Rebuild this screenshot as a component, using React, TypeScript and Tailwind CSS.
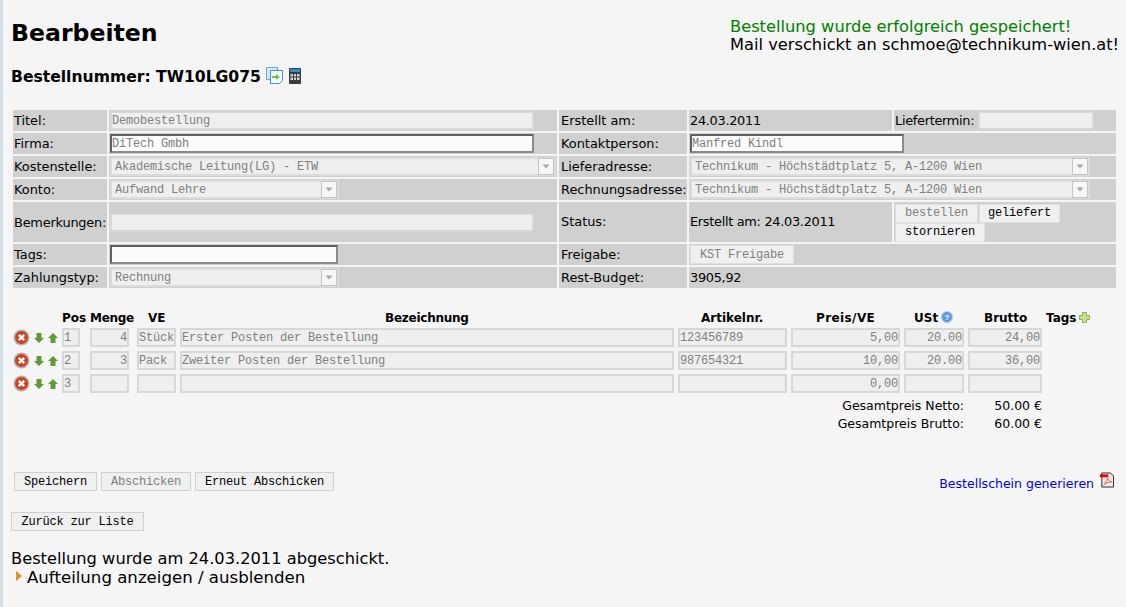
import React from "react";

const mono = "font-['Liberation_Mono',monospace] tracking-[-0.2px]";

function Field({ value = "", w, enabled = false, right = false, cls = "" }: { value?: string; w: string; enabled?: boolean; right?: boolean; cls?: string }) {
  return (
    <input
      readOnly
      value={value}
      className={`${w} ${cls} h-[19px] px-0 ${mono} text-[12px] leading-[14px] outline-none ${right ? "text-right" : ""} ${
        enabled
          ? "bg-[#fcfcfc] text-[#808080] border-2 border-t-[#606060] border-l-[#606060] border-r-[#8a8a8a] border-b-[#8a8a8a]"
          : "bg-[#efefef] text-[#808080] border-2 border-[#d8d8d8]"
      }`}
    />
  );
}

function Sel({ value, w }: { value: string; w: string }) {
  return (
    <div className={`${w} h-[19px] flex items-center justify-between bg-[#efefef] border-2 border-[#dcdcdc] pl-[3px] ${mono} text-[12px] text-[#808080]`}>
      <span className="pt-[1px]">{value}</span>
      <span className="w-[16px] h-[17px] bg-[#f7f7f7] border border-[#c4c4c4] flex items-center justify-center shrink-0">
        <svg width="8" height="5" viewBox="0 0 8 5"><path d="M0.5 0.5h7L4 4.5z" fill="#a8a8a8" /></svg>
      </span>
    </div>
  );
}

function Btn({ children, disabled = false, cls = "" }: { children: React.ReactNode; disabled?: boolean; cls?: string }) {
  return (
    <span className={`inline-flex items-center justify-center h-[19px] bg-[#f0f0f0] border border-[#d0d0d0] ${mono} text-[12px] ${disabled ? "text-[#808080]" : "text-black"} ${cls}`}>
      {children}
    </span>
  );
}

function Cell({ children, cls = "" }: { children?: React.ReactNode; cls?: string }) {
  return <div className={`bg-[#d0d0d0] flex items-center min-w-0 ${cls}`}>{children}</div>;
}

const DelIcon = () => (
  <svg width="17" height="17" viewBox="0 0 17 17">
    <circle cx="8.500" cy="8.500" r="8" fill="#b4b4b4" />
    <circle cx="8.500" cy="8.500" r="6.500" fill="#d2401e" />
    <path d="M5.800 5.800l5.400 5.400M11.200 5.800l-5.400 5.400" stroke="#fff" strokeWidth="2.400" />
  </svg>
);
const Down = () => (
  <svg width="10" height="10" viewBox="0 0 10 10"><path d="M2.500 0h5v5H10L5 10 0 5h2.500z" fill="#5f9a37" /></svg>
);
const Up = () => (
  <svg width="10" height="10" viewBox="0 0 10 10"><path d="M2.500 10h5V5H10L5 0 0 5h2.500z" fill="#5f9a37" /></svg>
);

function Row({ pos, menge, ve, bez, art, preis, ust, brutto }: { pos: string; menge?: string; ve?: string; bez?: string; art?: string; preis: string; ust?: string; brutto?: string }) {
  return (
    <div className="flex items-center h-[19px] mb-[4px]">
      <span className="w-[18px] flex justify-start"><DelIcon /></span>
      <span className="ml-[3px] flex"><Down /></span>
      <span className="ml-[4px] flex"><Up /></span>
      <Field value={pos} w="w-[18px]" cls="ml-[4px] pt-[1px]" />
      <Field value={menge} w="w-[39px]" right cls="ml-[10px] pt-[1px]" />
      <Field value={ve} w="w-[39px]" cls="ml-[8px] pt-[1px]" />
      <Field value={bez} w="w-[494px]" cls="ml-[4px] pt-[1px]" />
      <Field value={art} w="w-[109px]" cls="ml-[4px] pt-[1px]" />
      <Field value={preis} w="w-[109px]" right cls="ml-[4px] pt-[1px]" />
      <Field value={ust} w="w-[60px]" right cls="ml-[4px] pt-[1px]" />
      <Field value={brutto} w="w-[74px]" right cls="ml-[4px] pt-[1px]" />
    </div>
  );
}

export default function App() {
  return (
    <div className="w-[1126px] h-[607px] overflow-hidden bg-[#f5f5f5] border-l-[3px] border-[#d3dfe6] font-['DejaVu_Sans',sans-serif] text-black text-[12.9px] leading-[15px]">
      <header className="flex justify-between items-start pl-[8px] pr-[5px] pt-[17px]">
        <h1 className="text-[23.6px] leading-[29px] font-bold mt-[2px]">Bearbeiten</h1>
        <div className="text-[16.25px] leading-[18px] w-[391px] mt-[1px] whitespace-nowrap">
          <div className="text-[#008000]">Bestellung wurde erfolgreich gespeichert!</div>
          <div>Mail verschickt an schmoe@technikum-wien.at!</div>
        </div>
      </header>

      <h2 className="flex items-center text-[15.6px] leading-[19px] font-bold pl-[8px] mt-[14px]">
        Bestellnummer: TW10LG075
        <svg className="ml-[5px] -mt-[4px]" width="17" height="17" viewBox="0 0 17 17">
          <rect x="0.500" y="0.500" width="11" height="12" fill="#d4eaf8" stroke="#6fa9d6" />
          <path d="M4.500 3.500h12v10l-3 3h-9z" fill="#f3fafe" stroke="#4b8fca" />
          <path d="M6 9h4V7l4 3-4 3v-2H6z" fill="#74c04f" />
        </svg>
        <svg className="ml-[6px] -mt-[4px]" width="12" height="16" viewBox="0 0 12 16">
          <rect width="12" height="16" rx="1" fill="#3c3c3c" />
          <rect x="1" y="1" width="10" height="3" fill="#2f8fd0" />
          <path d="M1.500 6h2.500v2.500H1.500zM5 6h2v2.500H5zM8 6h2.500v2.500H8zM1.500 9.500h2.500V12H1.500zM5 9.500h2V12H5zM8 9.500h2.500V12H8z" fill="#d4d4d4" />
        </svg>
      </h2>

      <section className="ml-[10px] mt-[23px] w-[1103px] grid grid-cols-[94px_448px_128px_203px_222px] grid-rows-[21px_21px_21px_21px_40px_21px_21px] gap-[2px]">
        <Cell cls="pl-[1px]">Titel:</Cell>
        <Cell cls="pl-[1px]"><Field value="Demobestellung" w="w-[424px]" /></Cell>
        <Cell cls="pl-[2px]">Erstellt am:</Cell>
        <Cell cls="pl-[1px] tracking-[-0.3px]">24.03.2011</Cell>
        <Cell cls="pl-[1px] gap-[4px]"><span className="tracking-[-0.3px]">Liefertermin:</span><Field w="w-[116px]" /></Cell>

        <Cell cls="pl-[1px]">Firma:</Cell>
        <Cell cls="pl-[1px]"><Field value="DiTech Gmbh" w="w-[424px]" enabled /></Cell>
        <Cell cls="pl-[2px]">Kontaktperson:</Cell>
        <Cell cls="pl-[1px] col-span-2"><Field value="Manfred Kindl" w="w-[214px]" enabled /></Cell>

        <Cell cls="pl-[1px]">Kostenstelle:</Cell>
        <Cell cls="pl-[1px]"><Sel value="Akademische Leitung(LG) - ETW" w="w-[446px]" /></Cell>
        <Cell cls="pl-[2px]">Lieferadresse:</Cell>
        <Cell cls="pl-[1px] col-span-2"><Sel value="Technikum - Höchstädtplatz 5, A-1200 Wien" w="w-[400px]" /></Cell>

        <Cell cls="pl-[1px]">Konto:</Cell>
        <Cell cls="pl-[1px]"><Sel value="Aufwand Lehre" w="w-[229px]" /></Cell>
        <Cell cls="pl-[2px]">Rechnungsadresse:</Cell>
        <Cell cls="pl-[1px] col-span-2"><Sel value="Technikum - Höchstädtplatz 5, A-1200 Wien" w="w-[400px]" /></Cell>

        <Cell cls="pl-[1px]"><span className="tracking-[-0.2px]">Bemerkungen:</span></Cell>
        <Cell cls="pl-[1px]"><Field w="w-[424px]" /></Cell>
        <Cell cls="pl-[2px] pb-[1px]">Status:</Cell>
        <Cell cls="pl-[1px] pb-[1px] tracking-[-0.3px]">Erstellt am: 24.03.2011</Cell>
        <Cell cls="pl-[1px]">
          <div className="flex flex-wrap gap-x-[1px] gap-y-0 w-[180px] mt-[1px]">
            <Btn disabled cls="w-[83px] pt-[1px] !border-[#e0e0e0]">bestellen</Btn>
            <Btn cls="w-[81px] pt-[1px] !border-[#e0e0e0]">geliefert</Btn>
            <Btn cls="w-[90px] pt-[1px] !border-[#e0e0e0]">stornieren</Btn>
          </div>
        </Cell>

        <Cell cls="pl-[1px]">Tags:</Cell>
        <Cell cls="pl-[1px]"><Field w="w-[228px]" enabled /></Cell>
        <Cell cls="pl-[2px]">Freigabe:</Cell>
        <Cell cls="pl-[1px] col-span-2"><Btn disabled cls="w-[104px] pt-[1px] !border-[#e0e0e0]">KST Freigabe</Btn></Cell>

        <Cell cls="pl-[1px]">Zahlungstyp:</Cell>
        <Cell cls="pl-[1px]"><Sel value="Rechnung" w="w-[229px]" /></Cell>
        <Cell cls="pl-[2px]">Rest-Budget:</Cell>
        <Cell cls="pl-[1px] col-span-2 tracking-[-0.3px]">3905,92</Cell>
      </section>

      <section className="ml-[10px] mt-[21px]">
        <div className="relative h-[18px] font-bold text-[12px] leading-[18px]">
          <span className="absolute left-[49px]">Pos</span>
          <span className="absolute left-[77px] tracking-[-0.3px]">Menge</span>
          <span className="absolute left-[135px]">VE</span>
          <span className="absolute left-[372px] tracking-[-0.25px]">Bezeichnung</span>
          <span className="absolute left-[688px]">Artikelnr.</span>
          <span className="absolute left-[803px] tracking-[0.4px]">Preis/VE</span>
          <span className="absolute left-[901px] flex items-center gap-[3px]">
            USt
            <svg className="-mt-[2px]" width="12" height="12" viewBox="0 0 12 12"><circle cx="6" cy="6" r="5.500" fill="#5a9be0" stroke="#a9c9ea" /><text x="6" y="9" textAnchor="middle" fontSize="8" fontWeight="700" fill="#fff" fontFamily="Liberation Sans">?</text></svg>
          </span>
          <span className="absolute left-[971px]">Brutto</span>
          <span className="absolute left-[1033px] flex items-center gap-[3px]">
            Tags
            <svg className="-mt-[2px]" width="11" height="11" viewBox="0 0 11 11"><path d="M3.500 .5h4v3h3v4h-3v3h-4v-3h-3v-4h3z" fill="#c6e08c" stroke="#8fb34e" /></svg>
          </span>
        </div>
        <div className="mt-[1px]">
          <Row pos="1" menge="4" ve="Stück" bez="Erster Posten der Bestellung" art="123456789" preis="5,00" ust="20.00" brutto="24,00" />
          <Row pos="2" menge="3" ve="Pack" bez="Zweiter Posten der Bestellung" art="987654321" preis="10,00" ust="20.00" brutto="36,00" />
          <Row pos="3" preis="0,00" />
        </div>
      </section>

      <section className="w-[1039px] text-[12.5px] leading-[18px] mt-0">
        <div className="flex justify-end"><span className="mr-[15px]">Gesamtpreis Netto:</span><span className="w-[63px] text-right">50.00 €</span></div>
        <div className="flex justify-end"><span className="mr-[15px]">Gesamtpreis Brutto:</span><span className="w-[63px] text-right">60.00 €</span></div>
      </section>

      <section className="flex items-center justify-between ml-[11px] w-[1100px] mt-[39px]">
        <div className="flex gap-[4px]">
          <Btn cls="w-[83px] pt-[2px]">Speichern</Btn>
          <Btn disabled cls="w-[90px] pt-[2px]">Abschicken</Btn>
          <Btn cls="w-[139px] pt-[2px]">Erneut Abschicken</Btn>
        </div>
        <div className="flex items-center text-[12.5px] text-[#0000ee]">
          <span className="mt-[4px]">Bestellschein generieren</span>
          <svg className="ml-[5px] -mt-[4px]" width="15" height="16" viewBox="0 0 16 16">
            <path d="M3 .5h9l3.500 3V15.500H3z" fill="#f3e6e6" stroke="#222" />
            <rect x="1" y="2" width="9" height="3" fill="#e00000" />
            <path d="M5 13c3-2 4-6 4-9 0 4 2 6 5 6-3 0-6 1-9 3z" fill="none" stroke="#e86060" />
          </svg>
        </div>
      </section>

      <div className="ml-[8px] mt-[21px]"><Btn cls="w-[133px] pt-[2px]">Zurück zur Liste</Btn></div>

      <div className="ml-[8px] mt-[18px] text-[16.25px] leading-[19px]">
        <div>Bestellung wurde am 24.03.2011 abgeschickt.</div>
        <div className="flex items-center text-[16.6px]">
          <svg className="ml-[5px] -mt-[4px] mr-[5px]" width="6" height="10" viewBox="0 0 6 10"><path d="M0.500 0.500l5 4.500-5 4.500z" fill="#e69a1e" stroke="#b86d00" strokeWidth="0.5" /></svg>
          Aufteilung anzeigen / ausblenden
        </div>
      </div>
    </div>
  );
}
